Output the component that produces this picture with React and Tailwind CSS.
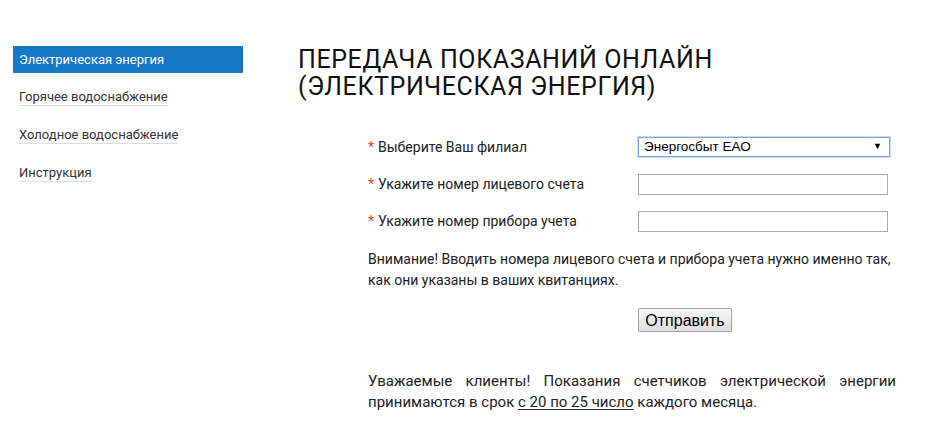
import React from 'react';

const menu = [
  { label: 'Электрическая энергия', active: true },
  { label: 'Горячее водоснабжение' },
  { label: 'Холодное водоснабжение' },
  { label: 'Инструкция' },
];

function Field({ label, children }) {
  return (
    <div className="flex items-center h-[20px]">
      <div className="w-[270px] text-[14px]">
        <span className="text-[#e8442b] mr-[4px]">*</span>
        {label}
      </div>
      {children}
    </div>
  );
}

export default function App() {
  return (
    <div className="flex min-h-[442px] bg-white text-[#222] font-['Roboto',sans-serif]">
      {/* sidebar */}
      <aside className="w-[230px] ml-[13px] mt-[46px] shrink-0">
        {menu.map((item, i) =>
          item.active ? (
            <div key={i} className="h-[27px] flex items-center px-[6px] bg-[#1878c8] text-white text-[13px]">
              {item.label}
            </div>
          ) : (
            <div key={i} className="h-[27px] mt-[11px] flex items-center px-[6px] text-[13px] text-[#333]">
              <span className="border-b border-[#dcdcdc] leading-[16px]">{item.label}</span>
            </div>
          )
        )}
      </aside>

      {/* content */}
      <main className="ml-[55px] mt-[46px]">
        <h1 className="text-[25px] leading-[27px] tracking-[0.6px] text-[#111] font-normal">
          ПЕРЕДАЧА ПОКАЗАНИЙ ОНЛАЙН
          <br />
          (ЭЛЕКТРИЧЕСКАЯ ЭНЕРГИЯ)
        </h1>

        <div className="ml-[70px] mt-[37px] w-[528px]">
          <div className="flex flex-col gap-[17px]">
            <Field label="Выберите Ваш филиал">
              <div className="w-[252px] h-[20px] border border-[#7ba4e8] shadow-[0_0_0_1px_#c9dbf7] flex items-center justify-between pl-[5px] pr-[7px] text-[13.5px] text-black font-['Liberation_Sans',Arial,sans-serif]">
                <span>Энергосбыт ЕАО</span>
                <span className="text-[9px]">▼</span>
              </div>
            </Field>
            <Field label="Укажите номер лицевого счета">
              <input type="text" className="w-[250px] h-[21px] border border-[#a9a9a9] outline-none" />
            </Field>
            <Field label="Укажите номер прибора учета">
              <input type="text" className="w-[250px] h-[21px] border border-[#a9a9a9] outline-none" />
            </Field>
          </div>

          <p className="mt-[18px] text-[14px] leading-[21px]">
            Внимание! Вводить номера лицевого счета и прибора учета нужно именно так, как они указаны в ваших квитанциях.
          </p>

          <div className="pl-[270px] mt-[17px]">
            <button
              type="button"
              className="w-[94px] h-[24px] border border-[#a3a3a3] rounded-[2px] bg-gradient-to-b from-[#f8f8f8] to-[#dddddd] text-[16px] text-black font-['Liberation_Sans',Arial,sans-serif]"
            >
              Отправить
            </button>
          </div>

          <p className="mt-[38px] text-[15px] leading-[21px] text-justify">
            Уважаемые клиенты! Показания счетчиков электрической энергии принимаются в срок{' '}
            <span className="underline underline-offset-2">с 20 по 25 число</span> каждого месяца.
          </p>
        </div>
      </main>
    </div>
  );
}
